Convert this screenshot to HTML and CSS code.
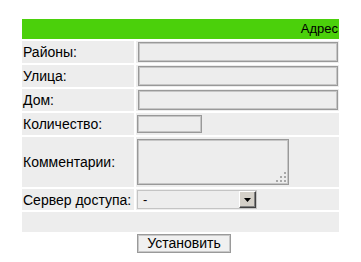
FILE: index.html
```html
<!DOCTYPE html>
<html lang="ru">
<head>
<meta charset="utf-8">
<title>Адрес</title>
<link rel="stylesheet" href="styles.css">
</head>
<body>
<div class="page">
  <table class="form">
    <colgroup><col class="c-label"><col class="c-field"></colgroup>
    <tr class="head"><td colspan="2">Адрес</td></tr>
    <tr class="row"><td class="label">Районы:</td><td class="field"><input class="text wide" type="text"></td></tr>
    <tr class="row"><td class="label">Улица:</td><td class="field"><input class="text wide" type="text"></td></tr>
    <tr class="row"><td class="label">Дом:</td><td class="field"><input class="text wide" type="text"></td></tr>
    <tr class="row"><td class="label">Количество:</td><td class="field"><input class="text short" type="text"></td></tr>
    <tr class="row tall"><td class="label">Комментарии:</td><td class="field"><span class="area-wrap"><textarea class="area"></textarea><svg class="grip" width="10" height="10" viewBox="0 0 10 10"><rect x="8" y="0" width="2" height="2"/><rect x="4" y="4" width="2" height="2"/><rect x="8" y="4" width="2" height="2"/><rect x="0" y="8" width="2" height="2"/><rect x="4" y="8" width="2" height="2"/><rect x="8" y="8" width="2" height="2"/></svg></span></td></tr>
    <tr class="row sel"><td class="label">Сервер доступа:</td><td class="field"><div class="select"><span class="sel-text">-</span><span class="sel-btn"><svg width="7" height="4" viewBox="0 0 7 4"><path d="M0 0H7L3.5 4Z"/></svg></span></div></td></tr>
    <tr class="row empty"><td colspan="2"></td></tr>
    <tr class="actions"><td></td><td class="btn-cell"><button class="btn" type="button">Установить</button></td></tr>
  </table>
</div>
</body>
</html>
```

FILE: styles.css
```css
html, body {
  margin: 0;
  padding: 0;
  background: #ffffff;
}
.page {
  padding: 17px 0 0 20px;
  font-family: "Liberation Sans", Arial, sans-serif;
  color: #000;
}
.form {
  width: 321px;
  border-collapse: separate;
  border-spacing: 2px;
  table-layout: fixed;
}
.c-label { width: 112px; }
.c-field { width: 203px; }
.form td {
  padding: 0 1px;
  font-size: 14px;
  vertical-align: middle;
}
.head td {
  background: #4bd00b;
  height: 20px;
  padding: 0 1px 0 0;
  text-align: right;
  font-size: 13px;
  line-height: 20px;
}
.row td {
  background: #ededed;
  height: 22px;
  padding-top: 0;
  padding-bottom: 0;
}
.row.tall td { height: 50px; }
.row.sel td { height: 21px; }
.row.empty td { height: 20px; }
.label {
  white-space: nowrap;
}
.text {
  display: block;
  box-sizing: border-box;
  height: 20px;
  margin: 0;
  padding: 0 2px;
  background: #ededed;
  border: 1px solid #999;
  box-shadow: inset 0 0 0 1px #c6c6c6;
  font: 13px "Liberation Sans", Arial, sans-serif;
  outline: none;
}
.text.wide {
  width: 200px;
  margin-left: 1px;
}
.text.short {
  width: 65px;
  height: 18px;
}
.area-wrap {
  position: relative;
  display: block;
  width: 152px;
  height: 46px;
}
.area {
  display: block;
  box-sizing: border-box;
  width: 152px;
  height: 46px;
  margin: 0;
  padding: 2px;
  background: #ededed;
  border: 1px solid #999;
  box-shadow: inset 0 0 0 1px #c6c6c6;
  resize: none;
  outline: none;
  font: 13px "Liberation Sans", Arial, sans-serif;
}
.grip {
  position: absolute;
  left: 139px;
  top: 33px;
  fill: #a8a8a8;
}
.select {
  display: flex;
  box-sizing: border-box;
  width: 120px;
  height: 19px;
  border: 1px solid #c4c4c4;
  background: #ededed;
  align-items: stretch;
}
.sel-text {
  flex: 1;
  padding-left: 5px;
  font-size: 13px;
  line-height: 17px;
}
.sel-btn {
  box-sizing: border-box;
  width: 17px;
  display: flex;
  align-items: center;
  justify-content: center;
  background: #d4d0c8;
  border-top: 1px solid #ffffff;
  border-left: 1px solid #ffffff;
  border-right: 1px solid #404040;
  border-bottom: 1px solid #404040;
  box-shadow: inset -1px -1px 0 #808080;
}
.sel-btn svg { fill: #000; }
.actions td {
  background: transparent;
  padding: 0 0 0 1px;
  vertical-align: top;
}
.btn {
  display: block;
  box-sizing: border-box;
  width: 94px;
  height: 19px;
  margin: 0;
  padding: 0;
  background: #f0f0f0;
  border: 1px solid #9a9a9a;
  box-shadow: inset 0 0 0 1px #c8c8c8;
  font: 14px "Liberation Sans", Arial, sans-serif;
  color: #000;
  line-height: 15px;
}
```
